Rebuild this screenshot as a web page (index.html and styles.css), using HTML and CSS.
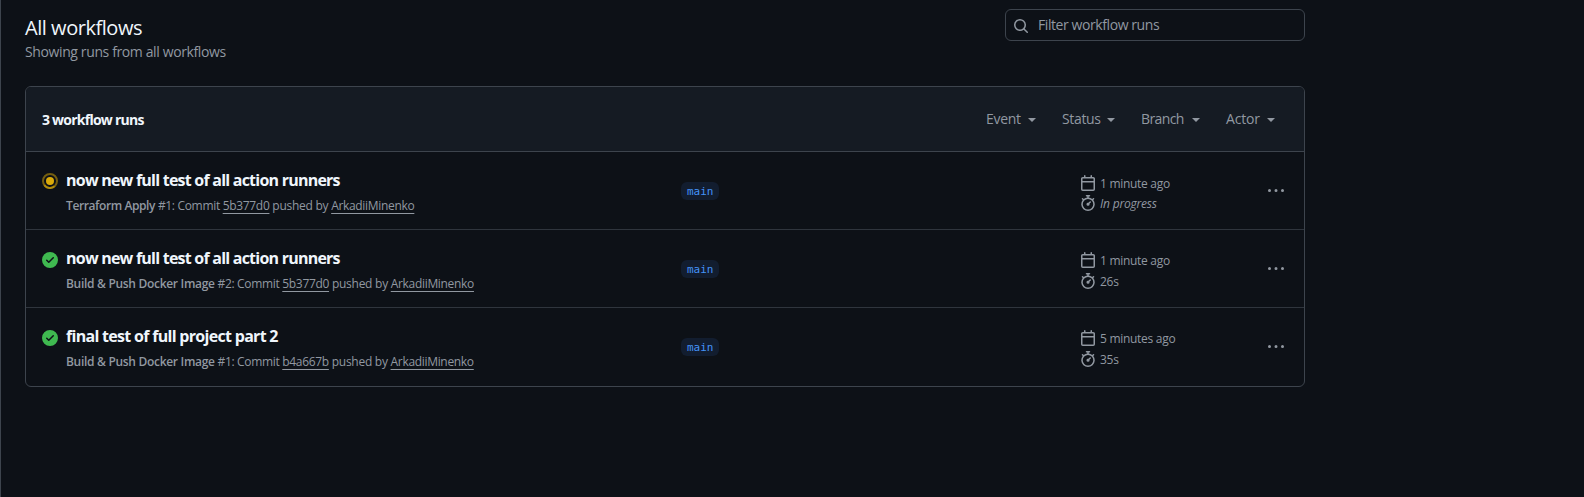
FILE: index.html
```
<!DOCTYPE html>
<html lang="en">
<head>
<meta charset="utf-8">
<title>Workflow runs</title>
<link rel="stylesheet" href="styles.css">
</head>
<body>
<svg class="sprite" aria-hidden="true">
  <symbol id="i-search" viewBox="0 0 16 16"><path d="M10.68 11.74a6 6 0 0 1-7.922-8.982 6 6 0 0 1 8.982 7.922l3.04 3.04a.749.749 0 0 1-.326 1.275.749.749 0 0 1-.734-.215ZM11.5 7a4.499 4.499 0 1 0-8.997 0A4.499 4.499 0 0 0 11.5 7Z"/></symbol>
  <symbol id="i-check" viewBox="0 0 16 16"><path d="M8 16A8 8 0 1 1 8 0a8 8 0 0 1 0 16Zm3.78-9.72a.751.751 0 0 0-.018-1.042.751.751 0 0 0-1.042-.018L6.75 9.19 5.28 7.72a.751.751 0 0 0-1.042.018.751.751 0 0 0-.018 1.042l2 2a.75.75 0 0 0 1.06 0Z"/></symbol>
  <symbol id="i-progress" viewBox="0 0 16 16"><circle cx="8" cy="8" r="7" fill="none" stroke="currentColor" stroke-width="2" opacity=".5"/><path d="M12.5 13.36A7 7 0 0 1 2.3 12.1" fill="none" stroke="currentColor" stroke-width="2" opacity=".6"/><circle cx="8" cy="8" r="4"/></symbol>
  <symbol id="i-calendar" viewBox="0 0 16 16"><path d="M4.75 0a.75.75 0 0 1 .75.75V2h5V.75a.75.75 0 0 1 1.5 0V2h1.25c.966 0 1.75.784 1.75 1.75v10.5A1.75 1.75 0 0 1 13.25 16H2.75A1.75 1.75 0 0 1 1 14.25V3.75C1 2.784 1.784 2 2.75 2H4V.75A.75.75 0 0 1 4.75 0ZM2.5 7.5v6.75c0 .138.112.25.25.25h10.5a.25.25 0 0 0 .25-.25V7.5Zm10.75-4H2.75a.25.25 0 0 0-.25.25V6h11V3.75a.25.25 0 0 0-.25-.25Z"/></symbol>
  <symbol id="i-stopwatch" viewBox="0 0 16 16"><path d="M5.75.75A.75.75 0 0 1 6.5 0h3a.75.75 0 0 1 0 1.5h-.75v1l-.001.041a6.724 6.724 0 0 1 3.464 1.435l.007-.006.75-.75a.749.749 0 0 1 1.275.326.749.749 0 0 1-.215.734l-.75.75-.006.007a6.75 6.75 0 1 1-10.548 0L2.72 5.03l-.75-.75a.751.751 0 0 1 .018-1.042.751.751 0 0 1 1.042-.018l.75.75.007.006A6.72 6.72 0 0 1 7.25 2.541V1.5H6.5a.75.75 0 0 1-.75-.75ZM8 14.5a5.25 5.25 0 1 0-.001-10.501A5.25 5.25 0 0 0 8 14.5Zm.389-6.7 1.33-1.33a.75.75 0 1 1 1.061 1.06L9.45 8.861A1.503 1.503 0 0 1 8 10.75a1.499 1.499 0 1 1 .389-2.95Z"/></symbol>
  <symbol id="i-kebab" viewBox="0 0 16 16"><path d="M8 9a1.5 1.5 0 1 0 0-3 1.5 1.5 0 0 0 0 3ZM1.5 9a1.5 1.5 0 1 0 0-3 1.5 1.5 0 0 0 0 3Zm13 0a1.5 1.5 0 1 0 0-3 1.5 1.5 0 0 0 0 3Z"/></symbol>
</svg>
<main class="page">
  <header class="page-head">
    <div>
      <h1 class="page-title">All workflows</h1>
      <p class="page-sub">Showing runs from all workflows</p>
    </div>
    <label class="search">
      <svg class="icon search-icon"><use href="#i-search"/></svg>
      <span>Filter workflow runs</span>
    </label>
  </header>

  <section class="box">
    <div class="box-head">
      <strong class="count">3 workflow runs</strong>
      <nav class="filters">
        <span class="filter event">Event</span>
        <span class="filter status">Status</span>
        <span class="filter branch-filter">Branch</span>
        <span class="filter actor">Actor</span>
      </nav>
    </div>

    <article class="run running">
      <div class="run-main">
        <svg class="icon state progress"><use href="#i-progress"/></svg>
        <div>
          <h2 class="run-title">now new full test of all action runners</h2>
          <p class="meta"><b class="tight">Terraform Apply</b> #1: Commit <a>5b377d0</a><span class="by"> pushed by </span><a>ArkadiiMinenko</a></p>
        </div>
      </div>
      <div class="branch-cell"><span class="branch">main</span></div>
      <div class="times">
        <div class="time"><svg class="icon"><use href="#i-calendar"/></svg><span>1 minute ago</span></div>
        <div class="time"><svg class="icon"><use href="#i-stopwatch"/></svg><em>In progress</em></div>
      </div>
      <svg class="icon kebab"><use href="#i-kebab"/></svg>
    </article>

    <article class="run">
      <div class="run-main">
        <svg class="icon state done"><use href="#i-check"/></svg>
        <div>
          <h2 class="run-title">now new full test of all action runners</h2>
          <p class="meta"><b>Build &amp; Push Docker Image</b> #2: Commit <a>5b377d0</a><span class="by"> pushed by </span><a>ArkadiiMinenko</a></p>
        </div>
      </div>
      <div class="branch-cell"><span class="branch">main</span></div>
      <div class="times">
        <div class="time"><svg class="icon"><use href="#i-calendar"/></svg><span>1 minute ago</span></div>
        <div class="time"><svg class="icon"><use href="#i-stopwatch"/></svg><span>26s</span></div>
      </div>
      <svg class="icon kebab"><use href="#i-kebab"/></svg>
    </article>

    <article class="run">
      <div class="run-main">
        <svg class="icon state done"><use href="#i-check"/></svg>
        <div>
          <h2 class="run-title final">final test of full project part 2</h2>
          <p class="meta"><b>Build &amp; Push Docker Image</b> #1: Commit <a>b4a667b</a><span class="by"> pushed by </span><a>ArkadiiMinenko</a></p>
        </div>
      </div>
      <div class="branch-cell"><span class="branch">main</span></div>
      <div class="times">
        <div class="time"><svg class="icon"><use href="#i-calendar"/></svg><span>5 minutes ago</span></div>
        <div class="time"><svg class="icon"><use href="#i-stopwatch"/></svg><span>35s</span></div>
      </div>
      <svg class="icon kebab"><use href="#i-kebab"/></svg>
    </article>
  </section>
</main>
</body>
</html>
```
FILE: styles.css
```
* { box-sizing: border-box; }

body {
  margin: 0;
  min-height: 100vh;
  overflow: hidden;
  background: #0d1117;
  border-left: 1px solid #3d444d;
  color: #f0f6fc;
  font: 14px/20px "Open Sans", "Noto Sans", sans-serif;
  white-space: nowrap;
}

h1, h2, p { margin: 0; }

.sprite { display: none; }
.icon { display: block; width: 16px; height: 16px; flex: none; fill: currentColor; }

.page { width: 1280px; margin-left: 24px; padding-top: 9px; }

.page-head { display: flex; justify-content: space-between; height: 77px; }
.page-title { margin-top: 4px; font-size: 20px; line-height: 29px; font-weight: 400; letter-spacing: -0.46px; }
.page-sub { color: #9198a1; letter-spacing: -0.38px; }

.search {
  display: flex;
  align-items: center;
  gap: 9px;
  width: 300px;
  height: 32px;
  padding-left: 7px;
  border: 1px solid #3d444d;
  border-radius: 6px;
  color: #9198a1;
  letter-spacing: -0.42px;
}
.search-icon { margin-top: 1px; }

.box { border: 1px solid #3d444d; border-radius: 6px; overflow: hidden; }

.box-head {
  display: flex;
  align-items: center;
  justify-content: space-between;
  height: 65px;
  padding: 0 29px 0 16px;
  background: #151b23;
  border-bottom: 1px solid #3d444d;
}
.count { padding-top: 2px; font-weight: 700; letter-spacing: -0.76px; }

.filters { display: flex; color: #9198a1; }
.filter { display: flex; align-items: center; justify-content: space-between; margin-left: 26px; }
.filter::after {
  content: "";
  margin-top: 2px;
  border: 4px solid transparent;
  border-top-color: currentColor;
  border-bottom: 0;
}
.event { width: 50px; letter-spacing: -0.3px; }
.status { width: 53px; letter-spacing: -0.35px; }
.branch-filter { width: 59px; letter-spacing: -0.6px; }
.actor { width: 49px; letter-spacing: -0.15px; }

.run {
  display: grid;
  grid-template-columns: 639px 399px 188px 16px;
  height: 78px;
  padding-left: 16px;
}
.run:not(:last-child) { border-bottom: 1px solid #2f353d; }

.run-main { display: flex; gap: 8px; padding-top: 16px; }
.state { margin-top: 6px; }
.running .state { margin-top: 5px; }
.progress { color: #dbab0a; }
.done { color: #3fb950; }

.run-title { font-size: 16px; line-height: 24px; font-weight: 700; letter-spacing: -0.77px; }
.final { letter-spacing: -0.7px; }

.meta { margin-top: 5px; font-size: 12px; line-height: 18px; color: #9198a1; letter-spacing: -0.32px; }
.meta b { font-weight: 600; letter-spacing: -0.3px; }
.meta .tight { letter-spacing: -0.4px; }
.meta .by { letter-spacing: -0.26px; }
.meta a {
  text-decoration: underline 1px;
  text-underline-offset: 3px;
  text-decoration-skip-ink: none;
}

.branch-cell { padding-top: 30px; }
.branch {
  display: block;
  width: 38px;
  height: 18px;
  padding-left: 6px;
  border-radius: 6px;
  background: #121d2f;
  color: #4493f8;
  font: 11px/19px "DejaVu Sans Mono", monospace;
}

.times { display: flex; flex-direction: column; gap: 5px; padding-top: 22px; color: #9198a1; }
.running .times { gap: 4px; padding-top: 23px; }
.time { display: flex; gap: 4px; height: 16px; font-size: 12px; line-height: 18px; letter-spacing: -0.29px; }
.time em { letter-spacing: -0.2px; }

.kebab { margin-top: 31px; color: #9198a1; }
```
